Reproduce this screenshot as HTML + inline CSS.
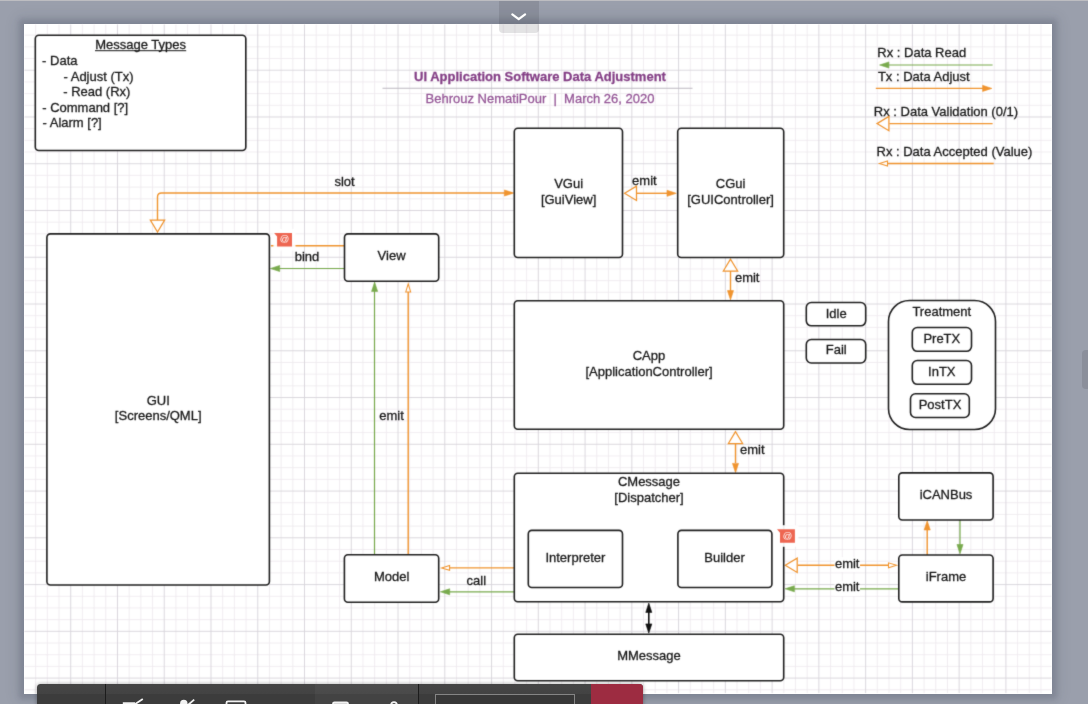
<!DOCTYPE html>
<html lang="en">
<head>
<meta charset="utf-8">
<title>UI Application Software Data Adjustment</title>
<style>
html,body{margin:0;padding:0;}
body{width:1088px;height:704px;overflow:hidden;position:relative;background:#9a9fac;font-family:"Liberation Sans",Arial,sans-serif;}
.topstrip{position:absolute;left:0;top:0;width:1088px;height:1.3px;background:#bdbdc1;}
.page{position:absolute;left:23.6px;top:23.6px;width:1028.7px;height:670.3px;background:#fff;box-shadow:0 0 5px 5px rgba(40,45,65,0.15),0 0 14px 6px rgba(40,45,65,0.10);}
svg.dia{position:absolute;left:0;top:0;width:1088px;height:704px;will-change:transform;font-family:"Liberation Sans",Arial,sans-serif;font-size:13px;}
.chev{position:absolute;left:499.2px;top:1.3px;width:39.5px;height:31.7px;background:rgba(40,40,50,0.13);border-radius:0 0 4px 4px;}
.chev svg{position:absolute;left:0;top:0;}
.handle{position:absolute;left:1081.5px;top:350px;width:12px;height:38.5px;border-radius:4px;background:rgba(40,40,50,0.13);}
.toolbar{position:absolute;left:37px;top:683.8px;width:606px;height:30px;background:linear-gradient(#454545 0,#434343 10.4px,#3c3c3c 10.4px);border-radius:3.5px 3.5px 0 0;overflow:hidden;box-shadow:0 0 4px rgba(0,0,0,0.35);}
.toolbar .sep{position:absolute;top:0;width:1.2px;height:30px;background:#1c1c1c;}
.toolbar .mid{position:absolute;left:277.5px;top:0;width:103.5px;height:30px;background:linear-gradient(#4c4c4c 0,#4a4a4a 10.4px,#434343 10.4px);}
.toolbar .red{position:absolute;left:554.3px;top:0;width:52px;height:30px;background:#9d2c41;}
.toolbar .inp{position:absolute;left:398px;top:10.2px;width:140.3px;height:20px;border:1.2px solid #858585;box-sizing:border-box;background:#383838;}
.toolbar svg{position:absolute;left:0;top:0;}
</style>
</head>
<body>
<div class="topstrip"></div>
<div class="page"></div>
<svg class="dia" width="1088" height="704" viewBox="0 0 1088 704">
<defs><filter id="soft" x="0" y="0" width="1088" height="704" filterUnits="userSpaceOnUse" color-interpolation-filters="sRGB"><feConvolveMatrix order="3" kernelMatrix="0.02 0.08 0.02 0.08 0.60 0.08 0.02 0.08 0.02" edgeMode="duplicate" preserveAlpha="false"/></filter></defs>
<g filter="url(#soft)">
<path d="M35.64 24.3V693.2M47.33 24.3V693.2M59.02 24.3V693.2M82.4 24.3V693.2M94.09 24.3V693.2M105.78 24.3V693.2M129.16 24.3V693.2M140.85 24.3V693.2M152.54 24.3V693.2M175.92 24.3V693.2M187.61 24.3V693.2M199.3 24.3V693.2M222.68 24.3V693.2M234.37 24.3V693.2M246.06 24.3V693.2M269.44 24.3V693.2M281.13 24.3V693.2M292.82 24.3V693.2M316.2 24.3V693.2M327.89 24.3V693.2M339.58 24.3V693.2M362.96 24.3V693.2M374.65 24.3V693.2M386.34 24.3V693.2M409.72 24.3V693.2M421.41 24.3V693.2M433.1 24.3V693.2M456.48 24.3V693.2M468.17 24.3V693.2M479.86 24.3V693.2M503.24 24.3V693.2M514.93 24.3V693.2M526.62 24.3V693.2M550.0 24.3V693.2M561.69 24.3V693.2M573.38 24.3V693.2M596.76 24.3V693.2M608.45 24.3V693.2M620.14 24.3V693.2M643.52 24.3V693.2M655.21 24.3V693.2M666.9 24.3V693.2M690.28 24.3V693.2M701.97 24.3V693.2M713.66 24.3V693.2M737.04 24.3V693.2M748.73 24.3V693.2M760.42 24.3V693.2M783.8 24.3V693.2M795.49 24.3V693.2M807.18 24.3V693.2M830.56 24.3V693.2M842.25 24.3V693.2M853.94 24.3V693.2M877.32 24.3V693.2M889.01 24.3V693.2M900.7 24.3V693.2M924.08 24.3V693.2M935.77 24.3V693.2M947.46 24.3V693.2M970.84 24.3V693.2M982.53 24.3V693.2M994.22 24.3V693.2M1017.6 24.3V693.2M1029.29 24.3V693.2M1040.98 24.3V693.2M24.3 35.14H1051.6M24.3 46.83H1051.6M24.3 58.52H1051.6M24.3 81.9H1051.6M24.3 93.59H1051.6M24.3 105.28H1051.6M24.3 128.66H1051.6M24.3 140.35H1051.6M24.3 152.04H1051.6M24.3 175.42H1051.6M24.3 187.11H1051.6M24.3 198.8H1051.6M24.3 222.18H1051.6M24.3 233.87H1051.6M24.3 245.56H1051.6M24.3 268.94H1051.6M24.3 280.63H1051.6M24.3 292.32H1051.6M24.3 315.7H1051.6M24.3 327.39H1051.6M24.3 339.08H1051.6M24.3 362.46H1051.6M24.3 374.15H1051.6M24.3 385.84H1051.6M24.3 409.22H1051.6M24.3 420.91H1051.6M24.3 432.6H1051.6M24.3 455.98H1051.6M24.3 467.67H1051.6M24.3 479.36H1051.6M24.3 502.74H1051.6M24.3 514.43H1051.6M24.3 526.12H1051.6M24.3 549.5H1051.6M24.3 561.19H1051.6M24.3 572.88H1051.6M24.3 596.26H1051.6M24.3 607.95H1051.6M24.3 619.64H1051.6M24.3 643.02H1051.6M24.3 654.71H1051.6M24.3 666.4H1051.6M24.3 689.78H1051.6" stroke="#eee8ee" stroke-width="0.8" fill="none"/>
<path d="M70.71 24.3V693.2M117.47 24.3V693.2M164.23 24.3V693.2M210.99 24.3V693.2M257.75 24.3V693.2M304.51 24.3V693.2M351.27 24.3V693.2M398.03 24.3V693.2M444.79 24.3V693.2M491.55 24.3V693.2M538.31 24.3V693.2M585.07 24.3V693.2M631.83 24.3V693.2M678.59 24.3V693.2M725.35 24.3V693.2M772.11 24.3V693.2M818.87 24.3V693.2M865.63 24.3V693.2M912.39 24.3V693.2M959.15 24.3V693.2M1005.91 24.3V693.2M24.3 70.21H1051.6M24.3 116.97H1051.6M24.3 163.73H1051.6M24.3 210.49H1051.6M24.3 257.25H1051.6M24.3 304.01H1051.6M24.3 350.77H1051.6M24.3 397.53H1051.6M24.3 444.29H1051.6M24.3 491.05H1051.6M24.3 537.81H1051.6M24.3 584.57H1051.6M24.3 631.33H1051.6M24.3 678.09H1051.6" stroke="#d7d4da" stroke-width="0.9" fill="none"/>
<path d="M512 193 H161.5 Q157.5 193 157.5 197 V220" fill="none" stroke="#f0942f" stroke-width="1.4"/>
<polygon points="157.5,232.0 150.35,220.1 164.65,220.1" fill="#fff" stroke="#f0942f" stroke-width="1.25" stroke-linejoin="miter"/>
<polygon points="513.7,193 504.4,189.95 504.4,196.05" fill="#f0942f" stroke="#f0942f" stroke-width="0.6" stroke-linejoin="round"/>
<path d="M271 245.8 L344.5 245.8" fill="none" stroke="#f0942f" stroke-width="1.4" />
<path d="M278 268.5 L344.5 268.5" fill="none" stroke="#78aa4d" stroke-width="1.2" />
<polygon points="270.4,268.5 279.7,265.45 279.7,271.55" fill="#78aa4d" stroke="#78aa4d" stroke-width="0.6" stroke-linejoin="round"/>
<path d="M374.5 290 L374.5 555" fill="none" stroke="#78aa4d" stroke-width="1.2" />
<polygon points="374.6,282.1 371.55,291.4 377.65,291.4" fill="#78aa4d" stroke="#78aa4d" stroke-width="0.6" stroke-linejoin="round"/>
<path d="M408.2 292 L408.2 555" fill="none" stroke="#f0942f" stroke-width="1.4" />
<polygon points="408.2,283.9 405.75,291.9 410.65,291.9" fill="#fff" stroke="#f0942f" stroke-width="1.05" stroke-linejoin="miter"/>
<path d="M636.5 193.3 L668 193.3" fill="none" stroke="#f0942f" stroke-width="1.4" />
<polygon points="624.6,193.3 636.5,186.15 636.5,200.45" fill="#fff" stroke="#f0942f" stroke-width="1.25" stroke-linejoin="miter"/>
<polygon points="676.3,193.3 667.0,190.25 667.0,196.35" fill="#f0942f" stroke="#f0942f" stroke-width="0.6" stroke-linejoin="round"/>
<path d="M730.5 271 L730.5 291" fill="none" stroke="#f0942f" stroke-width="1.4" />
<polygon points="730.5,259.1 723.35,271.0 737.65,271.0" fill="#fff" stroke="#f0942f" stroke-width="1.25" stroke-linejoin="miter"/>
<polygon points="730.5,299.9 727.45,290.6 733.55,290.6" fill="#f0942f" stroke="#f0942f" stroke-width="0.6" stroke-linejoin="round"/>
<path d="M735.5 444 L735.5 463" fill="none" stroke="#f0942f" stroke-width="1.4" />
<polygon points="735.5,431.6 728.35,443.5 742.65,443.5" fill="#fff" stroke="#f0942f" stroke-width="1.25" stroke-linejoin="miter"/>
<polygon points="735.5,472.7 732.45,463.4 738.55,463.4" fill="#f0942f" stroke="#f0942f" stroke-width="0.6" stroke-linejoin="round"/>
<path d="M449.5 567.9 L514.5 567.9" fill="none" stroke="#f0942f" stroke-width="1.4" />
<polygon points="441.6,567.9 449.6,565.45 449.6,570.35" fill="#fff" stroke="#f0942f" stroke-width="1.05" stroke-linejoin="miter"/>
<path d="M448 591.8 L514.5 591.8" fill="none" stroke="#78aa4d" stroke-width="1.2" />
<polygon points="440.4,591.8 449.7,588.75 449.7,594.85" fill="#78aa4d" stroke="#78aa4d" stroke-width="0.6" stroke-linejoin="round"/>
<path d="M797.8 565.3 L888.5 565.3" fill="none" stroke="#f0942f" stroke-width="1.4" />
<polygon points="785.3,565.3 797.2,558.15 797.2,572.45" fill="#fff" stroke="#f0942f" stroke-width="1.25" stroke-linejoin="miter"/>
<polygon points="896.5,565.3 888.5,562.85 888.5,567.75" fill="#fff" stroke="#f0942f" stroke-width="1.05" stroke-linejoin="miter"/>
<path d="M793 588.8 L899 588.8" fill="none" stroke="#78aa4d" stroke-width="1.2" />
<polygon points="785.1,588.8 794.4,585.75 794.4,591.85" fill="#78aa4d" stroke="#78aa4d" stroke-width="0.6" stroke-linejoin="round"/>
<path d="M927.2 530 L927.2 555" fill="none" stroke="#f0942f" stroke-width="1.4" />
<polygon points="927.2,520.7 924.15,530.0 930.25,530.0" fill="#f0942f" stroke="#f0942f" stroke-width="0.6" stroke-linejoin="round"/>
<path d="M960 520 L960 546" fill="none" stroke="#78aa4d" stroke-width="1.2" />
<polygon points="960,553.8 956.95,544.5 963.05,544.5" fill="#78aa4d" stroke="#78aa4d" stroke-width="0.6" stroke-linejoin="round"/>
<path d="M648.8 610 L648.8 626" fill="none" stroke="#111" stroke-width="1.6" />
<polygon points="648.8,603.1 645.75,612.4 651.85,612.4" fill="#111" stroke="#111" stroke-width="0.6" stroke-linejoin="round"/>
<polygon points="648.8,633.2 645.75,623.9 651.85,623.9" fill="#111" stroke="#111" stroke-width="0.6" stroke-linejoin="round"/>
<rect x="35.3" y="35.3" width="210.5" height="115.2" rx="3.5" ry="3.5" fill="#fff" stroke="#1f1f1f" stroke-width="1.6"/>
<rect x="46.9" y="233.9" width="222.5" height="351.1" rx="3.5" ry="3.5" fill="#fff" stroke="#1f1f1f" stroke-width="1.6"/>
<rect x="344.5" y="233.9" width="94.2" height="47.4" rx="3.5" ry="3.5" fill="#fff" stroke="#1f1f1f" stroke-width="1.6"/>
<rect x="344.4" y="554.8" width="94.3" height="47.4" rx="3.5" ry="3.5" fill="#fff" stroke="#1f1f1f" stroke-width="1.6"/>
<rect x="514.3" y="128.3" width="108.2" height="129.2" rx="3.5" ry="3.5" fill="#fff" stroke="#1f1f1f" stroke-width="1.6"/>
<rect x="677.7" y="128.3" width="106.0" height="129.2" rx="3.5" ry="3.5" fill="#fff" stroke="#1f1f1f" stroke-width="1.6"/>
<rect x="514.3" y="300.8" width="269.4" height="128.5" rx="3.5" ry="3.5" fill="#fff" stroke="#1f1f1f" stroke-width="1.6"/>
<rect x="514.3" y="473.2" width="269.4" height="128.6" rx="3.5" ry="3.5" fill="#fff" stroke="#1f1f1f" stroke-width="1.6"/>
<rect x="528.3" y="530.4" width="94.2" height="57.1" rx="3.5" ry="3.5" fill="#fff" stroke="#1f1f1f" stroke-width="1.6"/>
<rect x="677.9" y="530.4" width="94.0" height="57.1" rx="3.5" ry="3.5" fill="#fff" stroke="#1f1f1f" stroke-width="1.6"/>
<rect x="514.3" y="634.3" width="269.4" height="46.5" rx="3.5" ry="3.5" fill="#fff" stroke="#1f1f1f" stroke-width="1.6"/>
<rect x="898.8" y="472.9" width="94.3" height="47.1" rx="3.5" ry="3.5" fill="#fff" stroke="#1f1f1f" stroke-width="1.6"/>
<rect x="898.8" y="555" width="94.3" height="46.9" rx="3.5" ry="3.5" fill="#fff" stroke="#1f1f1f" stroke-width="1.6"/>
<rect x="806.3" y="302.5" width="59.4" height="23.3" rx="5" ry="5" fill="#fff" stroke="#1f1f1f" stroke-width="1.6"/>
<rect x="806.3" y="339.5" width="59.4" height="23.5" rx="5" ry="5" fill="#fff" stroke="#1f1f1f" stroke-width="1.6"/>
<rect x="888.5" y="300.5" width="107.0" height="129.0" rx="21" ry="21" fill="#fff" stroke="#1f1f1f" stroke-width="1.6"/>
<rect x="912.3" y="327.5" width="59.2" height="23.8" rx="5" ry="5" fill="#fff" stroke="#1f1f1f" stroke-width="1.6"/>
<rect x="912.3" y="360.5" width="59.2" height="23.8" rx="5" ry="5" fill="#fff" stroke="#1f1f1f" stroke-width="1.6"/>
<rect x="910.5" y="393.8" width="58.8" height="23.7" rx="5" ry="5" fill="#fff" stroke="#1f1f1f" stroke-width="1.6"/>
<rect x="273.4" y="228.9" width="22.1" height="21.6" fill="#fff" opacity="0.93"/>
<path d="M274.1 233.0 L292.0 233.0 L292.0 246.5 L277.1 246.5 L277.1 236.4 Z" fill="#ee6651"/>
<text x="284.6" y="242.4" text-anchor="middle" fill="#fff" font-size="9.4">@</text>
<rect x="776.3" y="525.2" width="22.1" height="21.6" fill="#fff" opacity="0.93"/>
<path d="M777.0 529.3 L794.9 529.3 L794.9 542.8 L780.0 542.8 L780.0 532.7 Z" fill="#ee6651"/>
<text x="787.5" y="538.7" text-anchor="middle" fill="#fff" font-size="9.4">@</text>
<text x="140.6" y="49" text-anchor="middle" fill="#161616" stroke="#161616" stroke-width="0.28" >Message Types</text>
<path d="M95 50.7H186.2" stroke="#161616" stroke-width="1"/>
<text x="42.1" y="65" text-anchor="start" fill="#161616" stroke="#161616" stroke-width="0.28" >- Data</text>
<text x="63.5" y="80.6" text-anchor="start" fill="#161616" stroke="#161616" stroke-width="0.28" >- Adjust (Tx)</text>
<text x="63.2" y="95.8" text-anchor="start" fill="#161616" stroke="#161616" stroke-width="0.28" >- Read (Rx)</text>
<text x="42.2" y="111.8" text-anchor="start" fill="#161616" stroke="#161616" stroke-width="0.28" >- Command [?]</text>
<text x="42.5" y="127.2" text-anchor="start" fill="#161616" stroke="#161616" stroke-width="0.28" >- Alarm [?]</text>
<text x="540" y="80.6" text-anchor="middle" fill="#843f86" stroke="#843f86" stroke-width="0.28" font-weight="bold">UI Application Software Data Adjustment</text>
<path d="M382.5 88.2H692.5" stroke="#bcb8c1" stroke-width="1.1"/>
<text x="540" y="103" text-anchor="middle" fill="#945596" stroke="#945596" stroke-width="0.28" xml:space="preserve">Behrouz NematiPour  |  March 26, 2020</text>
<text x="344.5" y="185.8" text-anchor="middle" fill="#161616" stroke="#161616" stroke-width="0.28" >slot</text>
<text x="307" y="260.8" text-anchor="middle" fill="#161616" stroke="#161616" stroke-width="0.28" >bind</text>
<text x="391.6" y="260" text-anchor="middle" fill="#161616" stroke="#161616" stroke-width="0.28" >View</text>
<text x="391.6" y="581.3" text-anchor="middle" fill="#161616" stroke="#161616" stroke-width="0.28" >Model</text>
<text x="476.3" y="584.8" text-anchor="middle" fill="#161616" stroke="#161616" stroke-width="0.28" >call</text>
<text x="391.5" y="420.1" text-anchor="middle" fill="#161616" stroke="#161616" stroke-width="0.28" >emit</text>
<text x="158.2" y="405.3" text-anchor="middle" fill="#161616" stroke="#161616" stroke-width="0.28" >GUI</text>
<text x="158.2" y="420.3" text-anchor="middle" fill="#161616" stroke="#161616" stroke-width="0.28" >[Screens/QML]</text>
<text x="568.6" y="188" text-anchor="middle" fill="#161616" stroke="#161616" stroke-width="0.28" >VGui</text>
<text x="568.6" y="203.7" text-anchor="middle" fill="#161616" stroke="#161616" stroke-width="0.28" >[GuiView]</text>
<text x="644.4" y="185.3" text-anchor="middle" fill="#161616" stroke="#161616" stroke-width="0.28" >emit</text>
<text x="730.6" y="188" text-anchor="middle" fill="#161616" stroke="#161616" stroke-width="0.28" >CGui</text>
<text x="730.6" y="203.7" text-anchor="middle" fill="#161616" stroke="#161616" stroke-width="0.28" >[GUIController]</text>
<text x="747.2" y="281.5" text-anchor="middle" fill="#161616" stroke="#161616" stroke-width="0.28" >emit</text>
<text x="649" y="360.2" text-anchor="middle" fill="#161616" stroke="#161616" stroke-width="0.28" >CApp</text>
<text x="649" y="376.2" text-anchor="middle" fill="#161616" stroke="#161616" stroke-width="0.28" >[ApplicationController]</text>
<text x="752.3" y="454.3" text-anchor="middle" fill="#161616" stroke="#161616" stroke-width="0.28" >emit</text>
<text x="649" y="486.3" text-anchor="middle" fill="#161616" stroke="#161616" stroke-width="0.28" >CMessage</text>
<text x="649" y="502.4" text-anchor="middle" fill="#161616" stroke="#161616" stroke-width="0.28" >[Dispatcher]</text>
<text x="575.4" y="562" text-anchor="middle" fill="#161616" stroke="#161616" stroke-width="0.28" >Interpreter</text>
<text x="724.5" y="562" text-anchor="middle" fill="#161616" stroke="#161616" stroke-width="0.28" >Builder</text>
<text x="649" y="660" text-anchor="middle" fill="#161616" stroke="#161616" stroke-width="0.28" >MMessage</text>
<text x="946" y="499.4" text-anchor="middle" fill="#161616" stroke="#161616" stroke-width="0.28" >iCANBus</text>
<text x="946" y="581.3" text-anchor="middle" fill="#161616" stroke="#161616" stroke-width="0.28" >iFrame</text>
<text x="836.2" y="317.6" text-anchor="middle" fill="#161616" stroke="#161616" stroke-width="0.28" >Idle</text>
<text x="836.2" y="354.3" text-anchor="middle" fill="#161616" stroke="#161616" stroke-width="0.28" >Fail</text>
<text x="941.8" y="316.3" text-anchor="middle" fill="#161616" stroke="#161616" stroke-width="0.28" >Treatment</text>
<text x="941.8" y="342.6" text-anchor="middle" fill="#161616" stroke="#161616" stroke-width="0.28" >PreTX</text>
<text x="941.8" y="376.3" text-anchor="middle" fill="#161616" stroke="#161616" stroke-width="0.28" >InTX</text>
<text x="940" y="409.3" text-anchor="middle" fill="#161616" stroke="#161616" stroke-width="0.28" >PostTX</text>
<rect x="834.5" y="557" width="25.5" height="15" fill="#fff"/>
<text x="847.2" y="568.2" text-anchor="middle" fill="#161616" stroke="#161616" stroke-width="0.28" >emit</text>
<rect x="834.5" y="581" width="25.5" height="15" fill="#fff"/>
<text x="847.2" y="591.3" text-anchor="middle" fill="#161616" stroke="#161616" stroke-width="0.28" >emit</text>
<text x="877.3" y="57.3" text-anchor="start" fill="#161616" stroke="#161616" stroke-width="0.28" >Rx : Data Read</text>
<path d="M888 65 L992.6 65" fill="none" stroke="#78aa4d" stroke-width="1.2" />
<polygon points="879.6,65 888.9,61.95 888.9,68.05" fill="#78aa4d" stroke="#78aa4d" stroke-width="0.6" stroke-linejoin="round"/>
<text x="877.9" y="81.4" text-anchor="start" fill="#161616" stroke="#161616" stroke-width="0.28" >Tx : Data Adjust</text>
<path d="M875.8 88.4 L984 88.4" fill="none" stroke="#f0942f" stroke-width="1.4" />
<polygon points="991.9,88.4 982.6,85.35 982.6,91.45" fill="#f0942f" stroke="#f0942f" stroke-width="0.6" stroke-linejoin="round"/>
<text x="873.8" y="116.4" text-anchor="start" fill="#161616" stroke="#161616" stroke-width="0.28" >Rx : Data Validation (0/1)</text>
<path d="M889.4 123.6 L992.6 123.6" fill="none" stroke="#f0942f" stroke-width="1.4" />
<polygon points="877.0,123.6 888.9,116.45 888.9,130.75" fill="#fff" stroke="#f0942f" stroke-width="1.25" stroke-linejoin="miter"/>
<text x="876.5" y="156.4" text-anchor="start" fill="#161616" stroke="#161616" stroke-width="0.28" >Rx : Data Accepted (Value)</text>
<path d="M887 163.5 L993.7 163.5" fill="none" stroke="#f0942f" stroke-width="1.4" />
<polygon points="879.5,163.5 887.5,161.05 887.5,165.95" fill="#fff" stroke="#f0942f" stroke-width="1.05" stroke-linejoin="miter"/>
</g>
</svg>
<div class="chev"><svg width="40" height="32" viewBox="0 0 40 32"><path d="M13.3 13.3 L19.7 18.1 L26.1 13.3" fill="none" stroke="#fff" stroke-width="2.2" stroke-linecap="round" stroke-linejoin="round"/></svg></div>
<div class="handle"></div>
<div class="toolbar">
<div class="mid"></div>
<div class="sep" style="left:68px"></div>
<div class="sep" style="left:381px"></div>
<div class="inp"></div>
<div class="red"></div>
<svg width="606" height="30" viewBox="0 0 606 30">
<g fill="none" stroke="#f2f2f2" stroke-width="1.8">
<path d="M85.8 19.2 H98 M97.5 20.5 L105.8 15"/>
<path d="M151 21 L157.2 15.6"/>
<rect x="189.5" y="17.3" width="19" height="14" rx="1.5"/>
<rect x="296" y="18.3" width="15" height="12" rx="1.5" fill="#d0d0d0"/>
<circle cx="357" cy="21" r="2.8"/>
<path d="M343 22.5 H351"/>
</g>
<circle cx="146.8" cy="19.4" r="3.7" fill="#f2f2f2"/>
</svg>
</div>
</body>
</html>
